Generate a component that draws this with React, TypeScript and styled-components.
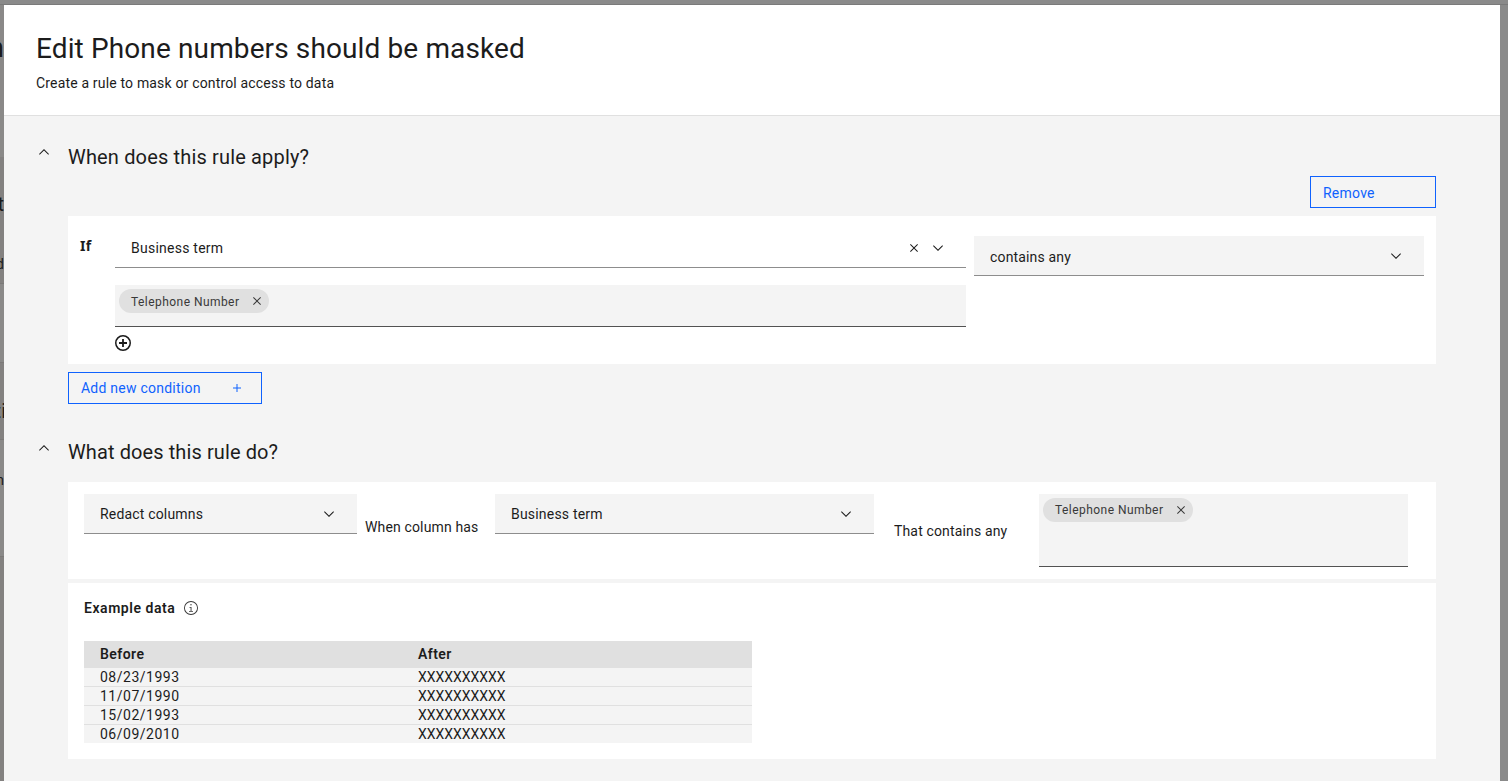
import React from "react";
import styled, { createGlobalStyle } from "styled-components";

const GlobalStyle = createGlobalStyle`
  * { box-sizing: border-box; }
  body {
    margin: 0;
    overflow: hidden;
    font-family: Roboto, "Liberation Sans", sans-serif;
    font-size: 14px;
    line-height: 18px;
    color: #1c1c1c;
  }
`;

const Backdrop = styled.div`
  display: grid;
  grid-template-columns: 4px 1496px 8px;
  grid-template-rows: 5px 776px;
  width: 1508px;
  height: 781px;
  background: #8a8a8a;
`;

const TopEdge = styled.div`
  grid-column: 1 / -1;
  border-bottom: 1px solid #7a7a7a;
`;

const PageSliver = styled.div`
  display: flex;
  flex-direction: column;
  overflow: hidden;
`;

const SliverBlock = styled.div<{ $height: number; $dark?: boolean; $ruled?: boolean }>`
  flex: none;
  display: flex;
  flex-direction: column;
  align-items: flex-end;
  overflow: hidden;
  height: ${(p) => p.$height}px;
  background: ${(p) => (p.$dark ? "#838180" : "#8a8988")};
  border-bottom: ${(p) => (p.$ruled ? "1px solid #7b7978" : "none")};
`;

const SliverText = styled.span<{ $size: number; $top: number; $shift?: number }>`
  flex: none;
  margin-top: ${(p) => p.$top}px;
  margin-right: ${(p) => p.$shift ?? 0}px;
  font-size: ${(p) => p.$size}px;
  line-height: ${(p) => p.$size}px;
`;

const Modal = styled.main`
  display: flex;
  flex-direction: column;
  background: #f4f4f4;
  overflow: hidden;
`;

const Header = styled.header`
  flex: none;
  height: 111px;
  padding: 26px 32px 0;
  background: #fff;
  border-bottom: 1px solid #e0e0e0;
`;

const Title = styled.h1`
  margin: 0;
  font-size: 28px;
  line-height: 36px;
  font-weight: 400;
  letter-spacing: 0.12px;
`;

const Subtitle = styled.p`
  margin: 7px 0 0;
  letter-spacing: 0.17px;
`;

const Body = styled.div`
  padding: 27px 64px 0 32px;
`;

const SectionHeading = styled.div<{ $height: number }>`
  display: flex;
  gap: 16px;
  height: ${(p) => p.$height}px;
  padding-top: 1px;
`;

const SectionTitle = styled.h2<{ $spacing: number; $rise: number }>`
  margin: -${(p) => p.$rise}px 0 0;
  font-size: 20px;
  line-height: 28px;
  font-weight: 400;
  letter-spacing: ${(p) => p.$spacing}px;
`;

const SectionContent = styled.div`
  display: flex;
  flex-direction: column;
  align-items: stretch;
  margin-left: 32px;
`;

const OutlineButton = styled.button<{ $width: number }>`
  display: flex;
  align-items: center;
  justify-content: space-between;
  width: ${(p) => p.$width}px;
  height: 32px;
  padding: 0 16px 0 12px;
  border: 1px solid #0f62fe;
  background: transparent;
  color: #0f62fe;
  font: inherit;
  letter-spacing: 0.24px;
`;

const RemoveLabel = styled.span`
  padding-top: 2px;
`;

const RemoveButton = styled(OutlineButton)`
  align-self: flex-end;
  margin: 5px 0 8px;
`;

const AddButton = styled(OutlineButton)`
  margin: 8px 0 35px;
`;

const ConditionCard = styled.section`
  display: grid;
  grid-template-columns: 35px 851px 450px;
  height: 148px;
  padding: 12px;
  background: #fff;
`;

const IfLabel = styled.span`
  padding-top: 9px;
  font-family: "Noto Sans", "Open Sans", sans-serif;
  font-weight: 700;
  letter-spacing: 0.2px;
`;

const ConditionFields = styled.div`
  display: flex;
  flex-direction: column;
`;

const OperatorField = styled.div`
  padding-top: 8px;
  margin-left: 8px;
  width: 450px;
`;

const Select = styled.div<{ $width: number; $plain?: boolean }>`
  flex: none;
  display: flex;
  align-items: center;
  gap: 8px;
  width: ${(p) => p.$width}px;
  height: 40px;
  padding: 0 20px 0 16px;
  background: ${(p) => (p.$plain ? "#fff" : "#f4f4f4")};
  border-bottom: 1px solid #8d8d8d;
`;

const SelectValue = styled.span<{ $spacing: number; $top?: number }>`
  flex: 1;
  padding-top: ${(p) => p.$top ?? 1}px;
  letter-spacing: ${(p) => p.$spacing}px;
`;

const TagInput = styled.div<{ $width: number; $height: number }>`
  width: ${(p) => p.$width}px;
  height: ${(p) => p.$height}px;
  padding: 4px;
  background: #f4f4f4;
  border-bottom: 1px solid #525252;
`;

const ConditionTags = styled(TagInput)`
  margin: 17px 0 8px;
`;

const Tag = styled.span`
  display: flex;
  align-items: center;
  justify-content: space-between;
  width: 150px;
  height: 24px;
  padding: 0 4px 0 12px;
  border-radius: 12px;
  background: #e0e0e0;
  color: #393939;
  font-size: 12px;
  letter-spacing: 0.45px;
`;

const TagLabel = styled.span<{ $top: number }>`
  padding-top: ${(p) => p.$top}px;
`;

const ActionCard = styled.section`
  display: flex;
  align-items: flex-start;
  height: 97px;
  margin-top: 16px;
  padding: 12px 16px;
  background: #fff;
`;

const InlineLabel = styled.span<{ $width: number; $left: number; $top: number }>`
  flex: none;
  width: ${(p) => p.$width}px;
  padding: ${(p) => p.$top}px 0 0 ${(p) => p.$left}px;
  letter-spacing: 0.15px;
`;

const ExampleCard = styled.section`
  height: 176px;
  margin-top: 4px;
  padding: 15px 16px 16px;
  background: #fff;
`;

const ExampleHeading = styled.h3`
  display: flex;
  align-items: center;
  gap: 8px;
  height: 20px;
  margin: 0 0 23px;
  font-size: 14px;
  font-weight: 600;
`;

const ExampleLabel = styled.span`
  width: 91px;
  white-space: nowrap;
  letter-spacing: 0.55px;
`;

const Table = styled.div`
  width: 668px;
`;

const TableHead = styled.div`
  display: grid;
  grid-template-columns: 318px 1fr;
  padding-left: 16px;
  background: #e0e0e0;
  font-weight: 600;
  line-height: 27px;
  letter-spacing: 0.45px;
`;

const TableRow = styled.div`
  display: grid;
  grid-template-columns: 318px 1fr;
  padding-left: 16px;
  background: #f4f4f4;
  line-height: 18px;
  & + & { border-top: 1px solid #e0e0e0; }
`;

const DateCell = styled.span`
  letter-spacing: 0.5px;
`;

const MaskCell = styled.span`
  letter-spacing: -0.03px;
`;

const Icon = styled.svg`
  flex: none;
  display: block;
  width: 16px;
  height: 16px;
  fill: currentColor;
`;

const InfoIcon = styled(Icon)`
  color: #393939;
`;

const ChevronDown = () => (
  <Icon viewBox="0 0 16 16"><path d="M8 11 3 6l.7-.7L8 9.6l4.3-4.3.7.7z" /></Icon>
);
const ChevronUp = () => (
  <Icon viewBox="0 0 16 16"><path d="m8 5 5 5-.7.7L8 6.4l-4.3 4.3L3 10z" /></Icon>
);
const Close = () => (
  <Icon viewBox="0 0 32 32">
    <path d="M17.414 16 24 9.414 22.586 8 16 14.586 9.414 8 8 9.414 14.586 16 8 22.586 9.414 24 16 17.414 22.586 24 24 22.586z" />
  </Icon>
);
const Add = () => (
  <Icon viewBox="0 0 32 32"><path d="M17 15V8h-2v7H8v2h7v7h2v-7h7v-2z" /></Icon>
);
const AddCircle = () => (
  <Icon viewBox="0 0 16 16">
    <circle cx="8" cy="8" r="7.25" fill="none" stroke="currentColor" strokeWidth="1.5" />
    <path d="M7.1 4h1.8v3.1H12v1.8H8.9V12H7.1V8.9H4V7.1h3.1z" />
  </Icon>
);
const Info = () => (
  <InfoIcon viewBox="0 0 32 32">
    <path d="M17 22v-8h-4v1.6h2.2V22H12v1.6h8V22zM16 8.2a1.4 1.4 0 1 0 1.4 1.4A1.4 1.4 0 0 0 16 8.2z" />
    <path d="M16 30a14 14 0 1 1 14-14 14 14 0 0 1-14 14zm0-26.2a12.2 12.2 0 1 0 12.2 12.2A12.2 12.2 0 0 0 16 3.8z" />
  </InfoIcon>
);

const rows = ["08/23/1993", "11/07/1990", "15/02/1993", "06/09/2010"];

const TermTag = ({ labelTop = 0 }: { labelTop?: number }) => (
  <Tag>
    <TagLabel $top={labelTop}>Telephone Number</TagLabel>
    <Close />
  </Tag>
);

export default function App() {
  return (
    <>
      <GlobalStyle />
      <Backdrop>
        <TopEdge />
        <PageSliver>
          <SliverBlock $height={152}>
            <SliverText $size={28} $top={29}>n</SliverText>
          </SliverBlock>
          <SliverBlock $height={127} $dark $ruled>
            <SliverText $size={20} $top={37}>t</SliverText>
            <SliverText $size={14} $top={43}>d</SliverText>
          </SliverBlock>
          <SliverBlock $height={79} $ruled />
          <SliverBlock $height={77} $dark $ruled>
            <SliverText $size={20} $top={38} $shift={-2}>ti</SliverText>
          </SliverBlock>
          <SliverBlock $height={117} $ruled>
            <SliverText $size={14} $top={33}>n</SliverText>
          </SliverBlock>
          <SliverBlock $height={224} $dark />
        </PageSliver>
        <Modal>
          <Header>
            <Title>Edit Phone numbers should be masked</Title>
            <Subtitle>Create a rule to mask or control access to data</Subtitle>
          </Header>
          <Body>
            <SectionHeading $height={28}>
              <ChevronUp />
              <SectionTitle $spacing={0.16} $rise={1}>When does this rule apply?</SectionTitle>
            </SectionHeading>
            <SectionContent>
              <RemoveButton $width={126}>
                <RemoveLabel>Remove</RemoveLabel>
              </RemoveButton>
              <ConditionCard>
                <IfLabel>If</IfLabel>
                <ConditionFields>
                  <Select $width={851} $plain>
                    <SelectValue $spacing={0.24}>Business term</SelectValue>
                    <Close />
                    <ChevronDown />
                  </Select>
                  <ConditionTags $width={851} $height={42}>
                    <TermTag labelTop={2} />
                  </ConditionTags>
                  <AddCircle />
                </ConditionFields>
                <OperatorField>
                  <Select $width={450}>
                    <SelectValue $spacing={0.16} $top={3}>contains any</SelectValue>
                    <ChevronDown />
                  </Select>
                </OperatorField>
              </ConditionCard>
              <AddButton $width={194}>
                <span>Add new condition</span>
                <Add />
              </AddButton>
            </SectionContent>
            <SectionHeading $height={27}>
              <ChevronUp />
              <SectionTitle $spacing={0.1} $rise={2}>What does this rule do?</SectionTitle>
            </SectionHeading>
            <SectionContent>
              <ActionCard>
                <Select $width={273}>
                  <SelectValue $spacing={0.18}>Redact columns</SelectValue>
                  <ChevronDown />
                </Select>
                <InlineLabel $width={138} $left={8} $top={24}>When column has</InlineLabel>
                <Select $width={379}>
                  <SelectValue $spacing={0.2}>Business term</SelectValue>
                  <ChevronDown />
                </Select>
                <InlineLabel $width={165} $left={20} $top={28}>That contains any</InlineLabel>
                <TagInput $width={369} $height={73}>
                  <TermTag />
                </TagInput>
              </ActionCard>
              <ExampleCard>
                <ExampleHeading>
                  <ExampleLabel>Example data</ExampleLabel>
                  <Info />
                </ExampleHeading>
                <Table>
                  <TableHead>
                    <span>Before</span>
                    <span>After</span>
                  </TableHead>
                  {rows.map((date) => (
                    <TableRow key={date}>
                      <DateCell>{date}</DateCell>
                      <MaskCell>XXXXXXXXXX</MaskCell>
                    </TableRow>
                  ))}
                </Table>
              </ExampleCard>
            </SectionContent>
          </Body>
        </Modal>
      </Backdrop>
    </>
  );
}
